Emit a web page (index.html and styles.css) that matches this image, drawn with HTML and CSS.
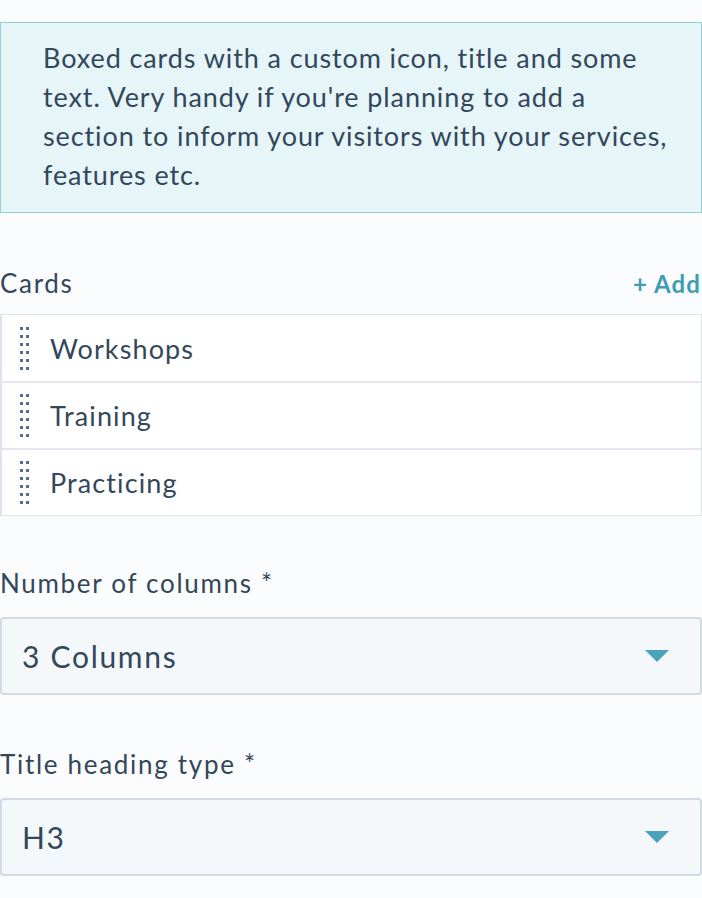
FILE: index.html
```html
<!DOCTYPE html>
<html>
<head>
  <title>Boxed cards</title>
  <link rel="stylesheet" href="styles.css">
</head>
<body>
  <div class="panel">
    <div class="help">
      Boxed cards with a custom icon, title and some text. Very handy if you're planning to add a section to inform your visitors with your services, features etc.
    </div>

    <div class="field-head">
      <span class="label">Cards</span>
      <span class="add">+ Add</span>
    </div>
    <div class="cards">
      <div class="card">
        <svg class="handle" width="9" height="43" viewBox="0 0 9 43"><use href="#dots"/></svg>
        <span>Workshops</span>
      </div>
      <div class="card">
        <svg class="handle" width="9" height="43" viewBox="0 0 9 43"><use href="#dots"/></svg>
        <span>Training</span>
      </div>
      <div class="card">
        <svg class="handle" width="9" height="43" viewBox="0 0 9 43"><use href="#dots"/></svg>
        <span>Practicing</span>
      </div>
    </div>

    <div class="field">
      <div class="label">Number of columns *</div>
      <div class="select">
        <span>3 Columns</span>
        <span class="caret"></span>
      </div>
    </div>

    <div class="field">
      <div class="label">Title heading type *</div>
      <div class="select">
        <span>H3</span>
        <span class="caret"></span>
      </div>
    </div>
  </div>

  <svg width="0" height="0" style="position:absolute">
    <defs>
      <g id="dots" fill="#516f90">
        <rect x="0" y="0" width="3" height="3"/><rect x="6" y="0" width="3" height="3"/>
        <rect x="0" y="8" width="3" height="3"/><rect x="6" y="8" width="3" height="3"/>
        <rect x="0" y="16" width="3" height="3"/><rect x="6" y="16" width="3" height="3"/>
        <rect x="0" y="24" width="3" height="3"/><rect x="6" y="24" width="3" height="3"/>
        <rect x="0" y="32" width="3" height="3"/><rect x="6" y="32" width="3" height="3"/>
        <rect x="0" y="40" width="3" height="3"/><rect x="6" y="40" width="3" height="3"/>
      </g>
    </defs>
  </svg>
</body>
</html>
```

FILE: styles.css
```css
body {
  margin: 0;
  padding: 0;
  background-color: #fbfcfd;
  font-family: Lato, "Noto Sans", Arial, sans-serif;
  color: #33475b;
}
.panel {
  padding-top: 22px;
}
.help {
  background-color: #e5f5f8;
  border: 1px solid #95cfdb;
  padding: 15px 24px 18px 42px;
  font-size: 27px;
  line-height: 39px;
  letter-spacing: 0.9px;
}
.field-head {
  display: flex;
  justify-content: space-between;
  align-items: center;
  margin-top: 51px;
  height: 38px;
}
.label {
  font-size: 26px;
  line-height: 38px;
  letter-spacing: 1.7px;
}
.add {
  color: #3d9db5;
  font-size: 24px;
  font-weight: 700;
  letter-spacing: 1.1px;
  padding-right: 1px;
}
.cards {
  margin-top: 12px;
  border: 1px solid #dfe3eb;
  border-left-width: 2px;
  background: #fff;
}
.card {
  display: flex;
  align-items: center;
  height: 65px;
  font-size: 27px;
  letter-spacing: 1.1px;
  border-top: 2px solid #e3e6ec;
}
.card:first-child {
  border-top: none;
  height: 66px;
}
.handle {
  flex: none;
  margin: 0 21px 0 18px;
}
.field {
  margin-top: 48px;
}
.field + .field {
  margin-top: 50px;
}
.field .label {
  margin-bottom: 15px;
}
.select {
  display: flex;
  justify-content: space-between;
  align-items: center;
  height: 74px;
  border: 2px solid #d3dae3;
  border-radius: 4px;
  background-color: #f5f8fa;
  padding: 0 31px 0 20px;
  font-size: 30px;
  letter-spacing: 1.7px;
}
.caret {
  width: 0;
  height: 0;
  border-left: 12px solid transparent;
  border-right: 12px solid transparent;
  border-top: 12px solid #4ba3bb;
}
```
